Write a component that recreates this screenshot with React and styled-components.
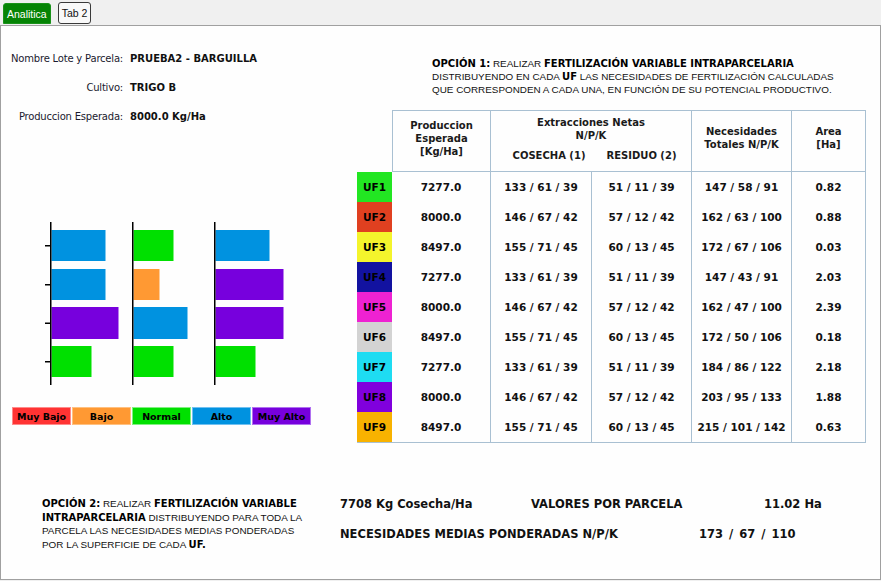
import React from "react";
import styled, { createGlobalStyle } from "styled-components";

const GlobalStyle = createGlobalStyle`
  html, body {
    margin: 0;
    padding: 0;
    background: #f0f0f0;
    font-family: "DejaVu Sans", Tahoma, sans-serif;
    color: #111;
  }
`;

const LEVEL = {
  muyBajo: { label: "Muy Bajo", color: "#ff3333", edge: "#ff8a8a" },
  bajo: { label: "Bajo", color: "#ff9933", edge: "#ffc080" },
  normal: { label: "Normal", color: "#00e000", edge: "#80f080" },
  alto: { label: "Alto", color: "#0092e0", edge: "#70c0f0" },
  muyAlto: { label: "Muy Alto", color: "#7700dd", edge: "#b070f0" },
};

// bar widths in px, one list per axis
const chart = [
  { x: 49, bars: [["alto", 54], ["alto", 54], ["muyAlto", 67], ["normal", 40]] },
  { x: 131, bars: [["normal", 40], ["bajo", 26], ["alto", 54], ["normal", 40]] },
  { x: 213, bars: [["alto", 54], ["muyAlto", 68], ["muyAlto", 68], ["normal", 40]] },
];
const barRows = [
  { y: 15, h: 31 },
  { y: 54, h: 31 },
  { y: 92, h: 32 },
  { y: 131, h: 31 },
];

const rows = [
  { uf: "UF1", color: "#22e622", prod: "7277.0", cos: "133 / 61 / 39", res: "51 / 11 / 39", nec: "147 / 58 / 91", area: "0.82" },
  { uf: "UF2", color: "#e04020", prod: "8000.0", cos: "146 / 67 / 42", res: "57 / 12 / 42", nec: "162 / 63 / 100", area: "0.88" },
  { uf: "UF3", color: "#f4f42c", prod: "8497.0", cos: "155 / 71 / 45", res: "60 / 13 / 45", nec: "172 / 67 / 106", area: "0.03" },
  { uf: "UF4", color: "#1212a0", prod: "7277.0", cos: "133 / 61 / 39", res: "51 / 11 / 39", nec: "147 / 43 / 91", area: "2.03" },
  { uf: "UF5", color: "#ee22d2", prod: "8000.0", cos: "146 / 67 / 42", res: "57 / 12 / 42", nec: "162 / 47 / 100", area: "2.39" },
  { uf: "UF6", color: "#d3d3d3", prod: "8497.0", cos: "155 / 71 / 45", res: "60 / 13 / 45", nec: "172 / 50 / 106", area: "0.18" },
  { uf: "UF7", color: "#1edcf2", prod: "7277.0", cos: "133 / 61 / 39", res: "51 / 11 / 39", nec: "184 / 86 / 122", area: "2.18" },
  { uf: "UF8", color: "#8000dd", prod: "8000.0", cos: "146 / 67 / 42", res: "57 / 12 / 42", nec: "203 / 95 / 133", area: "1.88" },
  { uf: "UF9", color: "#f8b200", prod: "8497.0", cos: "155 / 71 / 45", res: "60 / 13 / 45", nec: "215 / 101 / 142", area: "0.63" },
];

const LINE = "#a9c0d2";

const TabStrip = styled.div`
  display: flex;
  gap: 7px;
  height: 25px;
  padding: 3px 0 0 3px;
  box-sizing: border-box;
`;

const Tab = styled.div`
  height: 21px;
  padding: 0 3px;
  display: flex;
  align-items: center;
  box-sizing: border-box;
  border-radius: 3px 3px 0 0;
  font-family: "Liberation Sans", Arial, sans-serif;
  font-size: 10.5px;
  color: ${(p) => (p.active ? "#fff" : "#111")};
  background: ${(p) => (p.active ? "#058405" : "#f9f9f9")};
  border: 1px solid ${(p) => (p.active ? "#1a921a" : "#3a3a3a")};
  ${(p) => !p.active && "border-radius: 3px; height: 22px; margin-top: -1px;"}
`;

const Panel = styled.div`
  width: 881px;
  height: 555px;
  box-sizing: border-box;
  border: 1px solid #a0a0a0;
  background: #fefefe;
  display: flex;
  flex-direction: column;
`;

const Top = styled.div`
  display: flex;
`;

const LeftCol = styled.div`
  width: 356px;
  display: flex;
  flex-direction: column;
`;

const Info = styled.div`
  margin-top: 18px;
  display: grid;
  grid-template-columns: 122px auto;
  column-gap: 7px;
  grid-auto-rows: 29px;
  align-items: center;
  font-size: 10px;
`;

const Label = styled.div`
  text-align: right;
  letter-spacing: -0.2px;
  color: #1a1a2e;
`;

const Value = styled.div`
  font-weight: bold;
  color: #111;
`;

const Chart = styled.svg`
  display: block;
  margin-top: 84px;
`;

const Legend = styled.div`
  display: flex;
  gap: 1px;
  margin: 20px 0 0 11px;
`;

const LegendBox = styled.div`
  width: 59px;
  height: 18px;
  box-sizing: border-box;
  display: flex;
  align-items: center;
  justify-content: center;
  font-size: 9.5px;
  font-weight: bold;
  color: #000;
  background: ${(p) => p.color};
  border: 1px solid ${(p) => p.edge};
`;

const RightCol = styled.div`
  flex: 1;
  display: flex;
  flex-direction: column;
`;

const Note = styled.p`
  margin: 0;
  font-family: "Liberation Sans", Arial, sans-serif;
  font-size: 9.9px;
  line-height: 13.5px;
  color: #111;
  white-space: nowrap;
  b {
    font-family: "DejaVu Sans", Tahoma, sans-serif;
    font-size: 10px;
    color: #000;
  }
`;

const Option1 = styled(Note)`
  margin: 31px 0 0 75px;
  line-height: 13px;
`;

const Table = styled.table`
  margin-top: 14px;
  border-collapse: separate;
  border-spacing: 0;
  table-layout: fixed;
  width: 509px;
  font-weight: bold;
  color: #111;
`;

const Th = styled.th`
  padding: 0 0 ${(p) => (p.low ? 6 : 0)}px ${(p) => p.shift || 0}px;
  font-size: 10px;
  line-height: 13px;
  font-weight: bold;
  color: #1a1a1a;
  text-align: center;
  vertical-align: middle;
  border-top: ${(p) => (p.top ? `1px solid ${LINE}` : "none")};
  border-left: ${(p) => (p.first ? `1px solid ${LINE}` : "none")};
  border-right: ${(p) => (p.edge ? `1px solid ${LINE}` : "none")};
  border-bottom: ${(p) => (p.bottom ? `1px solid ${LINE}` : "none")};
`;

const Td = styled.td`
  height: 30px;
  padding: 0;
  font-size: 10.5px;
  text-align: center;
  vertical-align: middle;
  border-right: 1px solid ${LINE};
  border-bottom: ${(p) => (p.last ? `1px solid ${LINE}` : "none")};
`;

const UfCell = styled.td`
  height: 30px;
  padding: 0;
  font-size: 10.5px;
  text-align: center;
  background: ${(p) => p.color};
  color: #000;
  border-bottom: ${(p) => (p.last ? `1px solid ${LINE}` : "none")};
`;

const Bottom = styled.div`
  display: flex;
  margin-top: 54px;
  padding-left: 41px;
`;

const Option2 = styled(Note)`
  width: 298px;
`;

const Summary = styled.div`
  display: flex;
  flex-direction: column;
  gap: 16px;
  font-size: 11.5px;
  font-weight: bold;
  line-height: 14px;
  color: #111;
`;

const SumRow = styled.div`
  display: flex;
`;

const SumItem = styled.div`
  width: ${(p) => (p.w ? `${p.w}px` : "auto")};
  white-space: nowrap;
  word-spacing: ${(p) => (p.wide ? "2px" : "normal")};
`;

export default function App() {
  return (
    <>
      <GlobalStyle />
      <TabStrip>
        <Tab active>Analitica</Tab>
        <Tab>Tab 2</Tab>
      </TabStrip>
      <Panel>
        <Top>
          <LeftCol>
            <Info>
              <Label>Nombre Lote y Parcela:</Label>
              <Value>PRUEBA2 - BARGUILLA</Value>
              <Label>Cultivo:</Label>
              <Value>TRIGO B</Value>
              <Label>Produccion Esperada:</Label>
              <Value>8000.0 Kg/Ha</Value>
            </Info>
            <Chart width="330" height="172" viewBox="0 0 330 172">
              {chart.map((col, ci) => (
                <g key={ci}>
                  {col.bars.map(([lvl, w], i) => (
                    <rect
                      key={i}
                      x={col.x + 1.5}
                      y={barRows[i].y}
                      width={w}
                      height={barRows[i].h}
                      fill={LEVEL[lvl].color}
                    />
                  ))}
                  <rect x={col.x} y="7" width="1.5" height="163" fill="#000" />
                </g>
              ))}
              {barRows.map((r, i) => (
                <rect key={i} x="44" y={r.y + r.h / 2 - 0.5} width="5" height="1.5" fill="#000" />
              ))}
            </Chart>
            <Legend>
              {Object.values(LEVEL).map((l) => (
                <LegendBox key={l.label} color={l.color} edge={l.edge}>
                  {l.label}
                </LegendBox>
              ))}
            </Legend>
          </LeftCol>
          <RightCol>
            <Option1>
              <b>OPCIÓN 1:</b> REALIZAR <b>FERTILIZACIÓN VARIABLE INTRAPARCELARIA</b>
              <br />
              DISTRIBUYENDO EN CADA <b>UF</b> LAS NECESIDADES DE FERTILIZACIÓN CALCULADAS
              <br />
              QUE CORRESPONDEN A CADA UNA, EN FUNCIÓN DE SU POTENCIAL PRODUCTIVO.
            </Option1>
            <Table>
              <colgroup>
                <col style={{ width: 35 }} />
                <col style={{ width: 99 }} />
                <col style={{ width: 101 }} />
                <col style={{ width: 100 }} />
                <col style={{ width: 100 }} />
                <col style={{ width: 74 }} />
              </colgroup>
              <thead>
                <tr style={{ height: 36 }}>
                  <Th rowSpan={2} />
                  <Th rowSpan={2} top first edge bottom low>
                    Produccion
                    <br />
                    Esperada
                    <br />
                    [Kg/Ha]
                  </Th>
                  <Th colSpan={2} top edge>
                    Extracciones Netas
                    <br />
                    N/P/K
                  </Th>
                  <Th rowSpan={2} top edge bottom low>
                    Necesidades
                    <br />
                    Totales N/P/K
                  </Th>
                  <Th rowSpan={2} top edge bottom low>
                    Area
                    <br />
                    [Ha]
                  </Th>
                </tr>
                <tr style={{ height: 26 }}>
                  <Th bottom low shift={15}>COSECHA (1)</Th>
                  <Th edge bottom low>RESIDUO (2)</Th>
                </tr>
              </thead>
              <tbody>
                {rows.map((r, i) => {
                  const last = i === rows.length - 1;
                  return (
                    <tr key={r.uf}>
                      <UfCell color={r.color} last={last}>{r.uf}</UfCell>
                      <Td last={last}>{r.prod}</Td>
                      <Td last={last}>{r.cos}</Td>
                      <Td last={last}>{r.res}</Td>
                      <Td last={last}>{r.nec}</Td>
                      <Td last={last}>{r.area}</Td>
                    </tr>
                  );
                })}
              </tbody>
            </Table>
          </RightCol>
        </Top>
        <Bottom>
          <Option2>
            <b>OPCIÓN 2:</b> REALIZAR <b>FERTILIZACIÓN VARIABLE</b>
            <br />
            <b>INTRAPARCELARIA</b> DISTRIBUYENDO PARA TODA LA
            <br />
            PARCELA LAS NECESIDADES MEDIAS PONDERADAS
            <br />
            POR LA SUPERFICIE DE CADA <b>UF.</b>
          </Option2>
          <Summary>
            <SumRow>
              <SumItem w={191}>7708 Kg Cosecha/Ha</SumItem>
              <SumItem w={233}>VALORES POR PARCELA</SumItem>
              <SumItem>11.02 Ha</SumItem>
            </SumRow>
            <SumRow>
              <SumItem w={359}>NECESIDADES MEDIAS PONDERADAS N/P/K</SumItem>
              <SumItem wide>173 / 67 / 110</SumItem>
            </SumRow>
          </Summary>
        </Bottom>
      </Panel>
    </>
  );
}
